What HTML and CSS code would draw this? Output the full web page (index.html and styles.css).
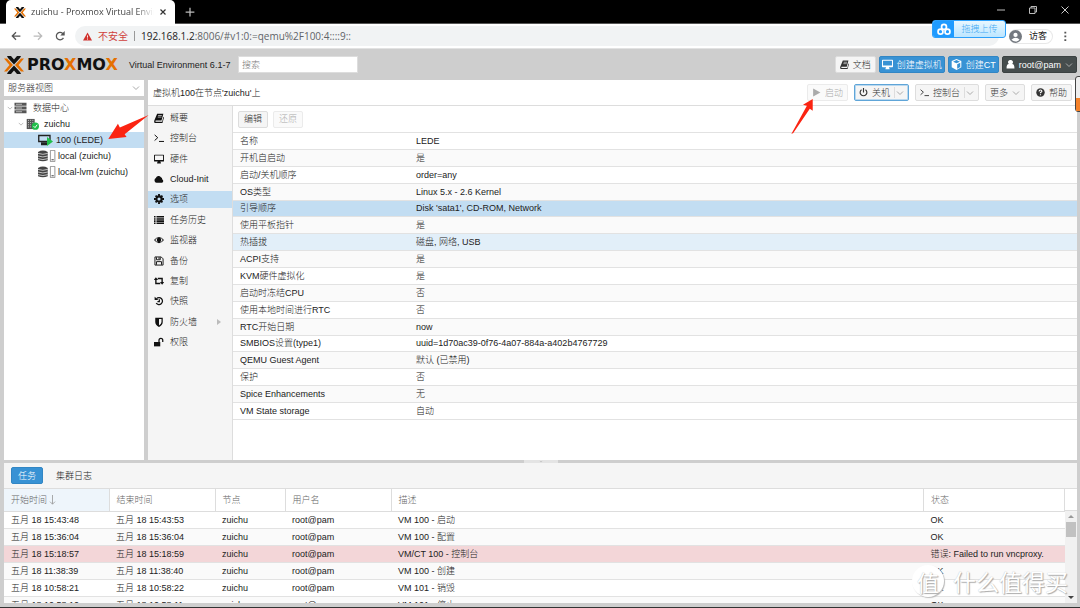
FILE: index.html
```html
<!DOCTYPE html>
<html lang="zh-CN">
<head>
<meta charset="utf-8">
<title>zuichu - Proxmox Virtual Environment</title>
<link rel="stylesheet" href="styles.css">
</head>
<body>
<svg class="sprite" aria-hidden="true">
  <symbol id="xmark" viewBox="0 0 20 18">
    <path d="M3 0h4l3 3.500L13 0h4l-1 2-6 6.500L4 2zM3 18h4l3-3.500 3 3.500h4l-1-2-6-6.500L4 16z" class="xdark"/>
    <path d="M0 2.500h3L9 9l-6 6.500H0L5.500 9zM20 2.500h-3L11 9l6 6.500h3L14.500 9z" class="xorange"/>
  </symbol>
  <symbol id="book" viewBox="0 0 16 16"><path d="M5 1h10l-3 11H3c-1 0-1 2 0 2h10l2-8 1 1-2.500 9H2c-2 0-2-2-1.500-4z"/><path d="M6.500 4h6M6 6.500h6" stroke="#fff" stroke-width="1"/></symbol>
  <symbol id="terminal" viewBox="0 0 16 16"><path d="M1 3l5 4.500L1 12M8 13.500h8" fill="none" stroke="currentColor" stroke-width="1.600"/></symbol>
  <symbol id="monitor" viewBox="0 0 16 16"><path fill-rule="evenodd" d="M1 1h14q1 0 1 1v9q0 1-1 1h-5l1 2v1H5v-1l1-2H1q-1 0-1-1V2q0-1 1-1zm.5 1.500v7h13v-7z"/></symbol>
  <symbol id="cloud" viewBox="0 0 16 16"><path d="M4 14a4 4 0 0 1-1-7.500A4.500 4.500 0 0 1 11 5a3 3 0 0 1 2 3.500A3 3 0 0 1 13 14z"/></symbol>
  <symbol id="gear" viewBox="0 0 16 16"><circle cx="8" cy="8" r="4.200" fill="none" stroke="currentColor" stroke-width="3.400"/><path d="M8 0v3M8 13v3M0 8h3M13 8h3M2.500 2.500l2 2M11.500 11.500l2 2M13.500 2.500l-2 2M4.500 11.500l-2 2" stroke="currentColor" stroke-width="3"/></symbol>
  <symbol id="list" viewBox="0 0 16 16"><path d="M0 1.500h2.500v2.500H0zM4 1.500h12v2.500H4zM0 5h2.500v2.500H0zM4 5h12v2.500H4zM0 8.500h2.500V11H0zM4 8.500h12V11H4zM0 12h2.500v2.500H0zM4 12h12v2.500H4z"/></symbol>
  <symbol id="eye" viewBox="0 0 16 16"><path fill-rule="evenodd" d="M0 8q8-10 16 0-8 10-16 0zm2 0q2 3 4 3.500Q3 8 6 4.500 4 5 2 8zm12 0q-2-3-4-3.500 3 3.500 0 7 2-.5 4-3.500z"/></symbol>
  <symbol id="floppy" viewBox="0 0 16 16"><path d="M1.500 1.500h10l3 3v10h-13zM4 2v4h6V2M4 14V9h8v5M8 2v3" fill="none" stroke="currentColor" stroke-width="1.500"/></symbol>
  <symbol id="retweet" viewBox="0 0 16 16"><path d="M3 6v6h7M13 10V4H6" fill="none" stroke="currentColor" stroke-width="2.200"/><path d="M3 2l3.500 4.500h-7zM13 14l3.500-4.500h-7z"/></symbol>
  <symbol id="history" viewBox="0 0 16 16"><path d="M4 4.200a5.600 5.600 0 1 1-.5 7.300M8.500 5v4H5.500" fill="none" stroke="currentColor" stroke-width="2"/><path d="M1 1l6 5.500H1z"/></symbol>
  <symbol id="shield" viewBox="0 0 16 16"><path fill-rule="evenodd" d="M2 1h12v7q0 5-6 8-6-3-6-8zm6 2v10.500q4-2.500 4-5.500V3z"/></symbol>
  <symbol id="unlock" viewBox="0 0 16 16"><path d="M0 8h10v7H0z"/><path d="M8 8V5a3 3 0 0 1 6 0v3" fill="none" stroke="currentColor" stroke-width="2"/></symbol>
  <symbol id="cube" viewBox="0 0 16 16"><path fill-rule="evenodd" d="M8 0l7 3v9l-7 4-7-4V3zm0 1.500L3 4l5 2 5-2zM9 7.500V14l4.500-2.500v-6z"/></symbol>
  <symbol id="user" viewBox="0 0 16 16"><path d="M8 0a4 4 0 0 1 3 7c3 0 4 3 4 8H1c0-5 1-8 4-8a4 4 0 0 1 3-7z"/></symbol>
  <symbol id="power" viewBox="0 0 16 16"><path d="M4.500 3a6 6 0 1 0 7 0M8 0v8" fill="none" stroke="currentColor" stroke-width="2"/></symbol>
  <symbol id="play" viewBox="0 0 16 16"><path d="M2 1l13 7-13 7z"/></symbol>
  <symbol id="help" viewBox="0 0 16 16"><circle cx="8" cy="8" r="7.500"/><path d="M5.500 6q0-2.500 2.500-2.500t2.500 2.200Q10.500 7 8 8v1.500M8 11v2" fill="none" stroke="#fff" stroke-width="2"/></symbol>
  <symbol id="chevron" viewBox="0 0 16 16"><path d="M2 5l6 6 6-6" fill="none" stroke="currentColor" stroke-width="2"/></symbol>
  <symbol id="servers" viewBox="0 0 16 16"><path d="M0 1h16v4H0zM0 6h16v4H0zM0 11h16v4H0z"/><path d="M2 3h8M2 8h8M2 13h8" stroke="#fff" stroke-width=".8"/></symbol>
  <symbol id="node" viewBox="0 0 18 16"><path d="M1 1h11v14H1z" fill="#555"/><path d="M3 3h1m2 0h1m2 0h1M3 6h1m2 0h1m2 0h1M3 9h1m2 0h1M3 12h1m2 0h1" stroke="#fff" stroke-width="1.200"/><circle cx="13" cy="11" r="5" fill="#21bf4b"/><path d="M10.500 11l2 2 3-4" fill="none" stroke="#fff" stroke-width="1.300"/></symbol>
  <symbol id="vm" viewBox="0 0 20 16"><path d="M1 2h15v8H1z" fill="none" stroke="#222" stroke-width="1.800"/><path d="M4 11h8v4H4z" fill="#222"/><path d="M12 4l8 6-8 6z" fill="#21bf4b"/></symbol>
  <symbol id="storage" viewBox="0 0 24 16"><path d="M0 2.500Q6.500-1 13 2.500v11q-6.500 3-13 0z" fill="#444"/><path d="M0 4.500q6.500 2.500 13 0M0 8q6.500 2.500 13 0M0 11.500q6.500 2.500 13 0" stroke="#fff" stroke-width=".9" fill="none"/><path d="M16.500.500h6v15h-6z" fill="#fff" stroke="#777"/><path d="M18 13h3" stroke="#555" stroke-width="1.500"/></symbol>
</svg>

<header class="browser">
  <div class="tabstrip">
    <div class="tab">
      <svg class="favicon"><use href="#xmark"/></svg>
      <span class="tab-title">zuichu - Proxmox Virtual Envir</span>
      <button class="plain" aria-label="关闭标签"><svg class="i8" viewBox="0 0 16 16"><path d="M3 3l10 10M13 3L3 13" stroke="#333" stroke-width="2.400"/></svg></button>
    </div>
    <button class="plain newtab" aria-label="新标签"><svg class="i10" viewBox="0 0 16 16"><path d="M8 1v14M1 8h14" stroke="#bbb" stroke-width="2"/></svg></button>
    <div class="winctl">
      <button class="plain" aria-label="最小化"><svg class="i8" viewBox="0 0 8 8"><path d="M0 4h8" stroke="#bbb"/></svg></button>
      <button class="plain" aria-label="还原窗口"><svg class="i8" viewBox="0 0 8 8"><path d="M.5 2h5.500v5.500H.5zM2 2V.5h5.500V6H6" fill="none" stroke="#bbb"/></svg></button>
      <button class="plain" aria-label="关闭"><svg class="i8" viewBox="0 0 8 8"><path d="M.5.5l7 7M7.500.5l-7 7" stroke="#ccc"/></svg></button>
    </div>
  </div>
  <div class="addressbar">
    <button class="plain" aria-label="后退"><svg class="i10" viewBox="0 0 16 16"><path d="M15 8H2M8 2L2 8l6 6" fill="none" stroke="#555" stroke-width="2"/></svg></button>
    <button class="plain" aria-label="前进"><svg class="i10" viewBox="0 0 16 16"><path d="M1 8h13M8 2l6 6-6 6" fill="none" stroke="#bbb" stroke-width="2"/></svg></button>
    <button class="plain" aria-label="刷新"><svg class="i10" viewBox="0 0 16 16"><path d="M13.500 11A6 6 0 1 1 12 3.500L14 6" fill="none" stroke="#555" stroke-width="2"/><path d="M15.500 0v7h-7z" fill="#555"/></svg></button>
    <div class="url">
      <svg class="i9" viewBox="0 0 16 16"><path d="M8 1l8 14H0z" fill="#d0312d"/><path d="M8 6v4M8 11.500v2" stroke="#fff" stroke-width="1.600"/></svg>
      <span class="insecure">不安全</span><span class="bar"></span><span class="address"><b>192.168.1.2</b>:8006/#v1:0:=qemu%2F100:4::::9::</span>
    </div>
    <button class="guest"><svg class="i13" viewBox="0 0 16 16"><circle cx="8" cy="8" r="8" fill="#747980"/><circle cx="8" cy="6" r="2.600" fill="#fff"/><path d="M3 12q5-5 10 0-5 4.500-10 0z" fill="#fff"/></svg>访客</button>
    <button class="plain menu-dots" aria-label="菜单"><svg class="i10" viewBox="0 0 16 16"><path d="M7 1h3v3H7zM7 7h3v3H7zM7 13h3v3H7z" fill="#555"/></svg></button>
  </div>
</header>

<div class="app">
  <div class="apphead">
    <div class="logo"><svg class="logomark"><use href="#xmark"/></svg><span>PRO<em>X</em>MO<em>X</em></span></div>
    <span class="version">Virtual Environment 6.1-7</span>
    <input class="search" type="text" placeholder="搜索" aria-label="搜索">
    <div class="headbtns">
      <button class="btn"><svg class="ic"><use href="#book"/></svg>文档</button>
      <button class="btn blue"><svg class="ic big"><use href="#monitor"/></svg>创建虚拟机</button>
      <button class="btn blue"><svg class="ic big"><use href="#cube"/></svg>创建CT</button>
      <button class="btn dark"><svg class="ic"><use href="#user"/></svg>root@pam<svg class="chev"><use href="#chevron"/></svg></button>
    </div>
  </div>

  <div class="workspace">
    <aside class="side">
      <div class="viewpick">
        <select aria-label="视图"><option>服务器视图</option></select>
        <svg class="chev"><use href="#chevron"/></svg>
      </div>
      <ul class="tree">
        <li class="l0"><svg class="chev"><use href="#chevron"/></svg><svg class="tnode"><use href="#servers"/></svg>数据中心</li>
        <li class="l1"><svg class="chev"><use href="#chevron"/></svg><svg class="tnode"><use href="#node"/></svg>zuichu</li>
        <li class="l2 on"><svg class="tvm"><use href="#vm"/></svg>100 (LEDE)</li>
        <li class="l2"><svg class="tstore"><use href="#storage"/></svg>local (zuichu)</li>
        <li class="l2"><svg class="tstore"><use href="#storage"/></svg>local-lvm (zuichu)</li>
      </ul>
    </aside>

    <main class="content">
      <div class="titlebar">
        <span>虚拟机100在节点'zuichu'上</span>
        <div class="actions">
          <button class="btn off" disabled><svg class="ic"><use href="#play"/></svg>启动</button>
          <button class="btn focus"><svg class="ic"><use href="#power"/></svg>关机<span class="split"><svg class="chev"><use href="#chevron"/></svg></span></button>
          <button class="btn"><svg class="ic"><use href="#terminal"/></svg>控制台<span class="split"><svg class="chev"><use href="#chevron"/></svg></span></button>
          <button class="btn">更多<svg class="chev"><use href="#chevron"/></svg></button>
          <button class="btn"><svg class="ic"><use href="#help"/></svg>帮助</button>
        </div>
      </div>
      <div class="split-body">
        <nav class="menu">
          <ul>
            <li><svg><use href="#book"/></svg>概要</li>
            <li><svg><use href="#terminal"/></svg>控制台</li>
            <li><svg><use href="#monitor"/></svg>硬件</li>
            <li><svg><use href="#cloud"/></svg>Cloud-Init</li>
            <li class="on"><svg><use href="#gear"/></svg>选项</li>
            <li><svg><use href="#list"/></svg>任务历史</li>
            <li><svg><use href="#eye"/></svg>监视器</li>
            <li><svg><use href="#floppy"/></svg>备份</li>
            <li><svg><use href="#retweet"/></svg>复制</li>
            <li><svg><use href="#history"/></svg>快照</li>
            <li><svg><use href="#shield"/></svg>防火墙<i class="more"></i></li>
            <li><svg><use href="#unlock"/></svg>权限</li>
          </ul>
        </nav>
        <section class="options">
          <div class="tools"><button class="btn">编辑</button><button class="btn off" disabled>还原</button></div>
          <table class="props">
            <tr><td>名称</td><td>LEDE</td></tr>
            <tr><td>开机自启动</td><td>是</td></tr>
            <tr><td>启动/关机顺序</td><td>order=any</td></tr>
            <tr><td>OS类型</td><td>Linux 5.x - 2.6 Kernel</td></tr>
            <tr class="on"><td>引导顺序</td><td>Disk 'sata1', CD-ROM, Network</td></tr>
            <tr><td>使用平板指针</td><td>是</td></tr>
            <tr class="hover"><td>热插拔</td><td>磁盘, 网络, USB</td></tr>
            <tr><td>ACPI支持</td><td>是</td></tr>
            <tr><td>KVM硬件虚拟化</td><td>是</td></tr>
            <tr><td>启动时冻结CPU</td><td>否</td></tr>
            <tr><td>使用本地时间进行RTC</td><td>否</td></tr>
            <tr><td>RTC开始日期</td><td>now</td></tr>
            <tr><td>SMBIOS设置(type1)</td><td>uuid=1d70ac39-0f76-4a07-884a-a402b4767729</td></tr>
            <tr><td>QEMU Guest Agent</td><td>默认 (已禁用)</td></tr>
            <tr><td>保护</td><td>否</td></tr>
            <tr><td>Spice Enhancements</td><td>无</td></tr>
            <tr><td>VM State storage</td><td>自动</td></tr>
          </table>
        </section>
      </div>
    </main>
  </div>

  <div class="splitter"><span><svg class="grip"><use href="#chevron"/></svg></span></div>

  <section class="log">
    <div class="logtabs"><button class="btn blue">任务</button><button class="plain">集群日志</button></div>
    <div class="logbody">
      <table class="tasks">
        <colgroup><col class="c-time"><col class="c-end"><col class="c-node"><col class="c-user"><col><col class="c-state"></colgroup>
        <thead><tr><th class="sorted">开始时间<svg class="sortarrow" viewBox="0 0 8 12"><path d="M4 0v11M1 8l3 3 3-3" fill="none" stroke="#999"/></svg></th><th>结束时间</th><th>节点</th><th>用户名</th><th>描述</th><th>状态</th></tr></thead>
        <tbody>
          <tr><td>五月 18 15:43:48</td><td>五月 18 15:43:53</td><td>zuichu</td><td>root@pam</td><td>VM 100 - 启动</td><td>OK</td></tr>
          <tr><td>五月 18 15:36:04</td><td>五月 18 15:36:04</td><td>zuichu</td><td>root@pam</td><td>VM 100 - 配置</td><td>OK</td></tr>
          <tr class="err"><td>五月 18 15:18:57</td><td>五月 18 15:18:59</td><td>zuichu</td><td>root@pam</td><td>VM/CT 100 - 控制台</td><td>错误: Failed to run vncproxy.</td></tr>
          <tr><td>五月 18 11:38:39</td><td>五月 18 11:38:40</td><td>zuichu</td><td>root@pam</td><td>VM 100 - 创建</td><td>OK</td></tr>
          <tr><td>五月 18 10:58:21</td><td>五月 18 10:58:22</td><td>zuichu</td><td>root@pam</td><td>VM 101 - 销毁</td><td>OK</td></tr>
          <tr><td>五月 18 10:58:10</td><td>五月 18 10:58:11</td><td>zuichu</td><td>root@pam</td><td>VM 101 - 停止</td><td>OK</td></tr>
        </tbody>
      </table>
      <div class="scrollcol"><div class="scrollhead"></div><div class="scrollbar"><i class="up"></i><i class="thumb"></i><i class="down"></i></div></div>
    </div>
  </section>
</div>

<div class="upload"><span class="upicon"><svg viewBox="0 0 16 14"><g fill="none" stroke="#fff" stroke-width="2"><circle cx="8" cy="4" r="2.800"/><circle cx="4" cy="9.500" r="2.800"/><circle cx="12" cy="9.500" r="2.800"/></g></svg></span><span class="uptext">拖拽上传</span></div>
<div class="edgeball"><i></i></div>
<svg class="arrow a1" viewBox="0 0 42 26"><path d="M42 0L17 20l2 3-19 2L10 9l2 4z"/></svg>
<svg class="arrow a2" viewBox="0 0 24 36"><path d="M0 36L16 7l-4-1L22 0v12l-3-2L2 35z"/></svg>
<div class="watermark"><span class="wm-ball">值</span><span>什么值得买</span></div>
</body>
</html>
```
FILE: styles.css
```css
* { box-sizing: border-box; }
body {
  margin: 0;
  height: 100vh;
  display: flex;
  flex-direction: column;
  overflow: hidden;
  position: relative;
  background: #cecece;
  color: #222;
  font: 300 9px/14px "Liberation Sans", "Noto Sans CJK SC", sans-serif;
  border-bottom: 1px solid #333;
}
button, input, select { font: inherit; color: inherit; margin: 0; }
ul { list-style: none; margin: 0; padding: 0; }
svg { flex: none; fill: currentColor; }
.sprite { position: absolute; width: 0; height: 0; }
.xdark { fill: #111; }
.xorange { fill: #e57000; }
.plain { border: 0; background: none; padding: 0; display: flex; align-items: center; justify-content: center; }
.i8 { width: 8px; height: 8px; }
.i9 { width: 9px; height: 9px; }
.i10 { width: 10px; height: 10px; }
.i13 { width: 13px; height: 13px; }

/* Browser chrome */
.browser { flex: none; font-family: "Open Sans", "Noto Sans CJK SC", sans-serif; font-weight: 400; }
.tabstrip { height: 24px; background: #000; display: flex; align-items: stretch; padding-left: 6px; border-bottom: 1px solid #555; }
.tab { width: 169px; background: #fff; border-radius: 5px 5px 0 0; display: flex; align-items: center; gap: 5px; padding: 0 8px; margin-bottom: -1px; }
.favicon { width: 12px; height: 11px; }
.tab-title { flex: 1; overflow: hidden; white-space: nowrap; color: #444; mask-image: linear-gradient(90deg, #000 85%, transparent); }
.newtab { width: 30px; }
.winctl { margin-left: auto; display: flex; gap: 24px; padding: 0 11px 4px 0; }
.addressbar { height: 25px; background: #fff; display: flex; align-items: center; gap: 12px; padding-left: 11px; border-bottom: 1px solid #e2e2e2; }
.url { flex: 1; height: 20px; border-radius: 10px; background: #f1f3f4; display: flex; align-items: center; padding-left: 8px; gap: 6px; font-size: 10px; margin-left: -2px; }
.insecure { color: #d0403c; }
.bar { width: 1px; height: 10px; background: #999; }
.address { color: #5f6368; }
.address b { font-weight: 400; color: #222; }
.guest { display: flex; align-items: center; gap: 7px; border: 1px solid #e8e8e8; border-left: 0; border-radius: 8px; background: #fff; padding: 0 5px 0 0; height: 15px; margin-left: -2px; }
.menu-dots { width: 20px; margin: 0 5px 0 -10px; }

/* Shared buttons */
.btn { height: 17px; border: 1px solid #ddd; border-radius: 2px; background: #f5f5f5; color: #333; display: flex; align-items: center; justify-content: center; gap: 4px; padding: 0 4px; white-space: nowrap; line-height: 14px; }
.btn.blue { background: #3892d4; border-color: #3286c4; color: #fff; padding: 0 2px; }
.btn.dark { background: #464d4d; border-color: #3c4242; color: #fff; padding: 0 3px; }
.btn.off { color: #aaa; border-color: #ebebeb; background: #fafafa; }
.btn.focus { border-color: #5fa5d8; box-shadow: inset 0 0 0 1px #b9d8ef; }
.ic { width: 9px; height: 9px; }
.ic.big { width: 11px; height: 11px; }
.chev { width: 8px; height: 8px; color: #aaa; }
.split { align-self: stretch; display: flex; align-items: center; border-left: 1px solid #ddd; margin: 2px 0; padding-left: 1px; }

/* Application */
.app { flex: 1; min-height: 0; display: flex; flex-direction: column; border: 1px solid #cecece; border-width: 0 3px 4px 4px; }
.apphead { height: 31px; flex: none; display: flex; align-items: center; }
.logo { display: flex; align-items: center; gap: 3px; width: 125px; color: #111; font: bold 16px/18px "DejaVu Sans", sans-serif; }
.logo em { font-style: normal; color: #e57000; }
.logomark { width: 20px; height: 18px; }
.version { width: 109px; white-space: nowrap; }
.search { width: 120px; height: 17px; border: 1px solid #ddd; background: #fff; padding: 0 3px; }
.search::placeholder { color: #777; }
.headbtns { margin-left: auto; display: flex; gap: 3px; }
.workspace { flex: 1; min-height: 0; display: flex; gap: 4px; }
.side { width: 140px; display: flex; flex-direction: column; gap: 4px; }
.viewpick { display: grid; height: 16px; align-items: center; background: #fff; }
.viewpick select { grid-area: 1 / 1; appearance: none; border: 0; background: #fff; height: 16px; padding: 0 4px; color: #333; }
.viewpick .chev { grid-area: 1 / 1; justify-self: end; margin-right: 4px; }
.tree { flex: 1; background: #fff; }
.tree li { height: 16px; display: flex; align-items: center; color: #222; }
.l0 { padding-left: 3px; }
.l1 { padding-left: 14px; }
.l2 { padding-left: 34px; }
.tree .on { background: #c2ddf2; }
.tree .chev { width: 6px; height: 6px; margin-right: 2px; }
.tnode { width: 13px; height: 12px; margin-right: 5px; color: #555; }
.l0 .tnode { margin: 0 6px 0 -1px; }
.tvm { width: 15px; height: 12px; margin-right: 3px; }
.tstore { width: 18px; height: 12px; margin-right: 2px; }

.content { flex: 1; min-width: 0; background: #fff; display: flex; flex-direction: column; }
.titlebar { height: 26px; display: flex; align-items: center; justify-content: space-between; padding: 0 5px; border-bottom: 1px solid #ddd; flex: none; }
.actions { display: flex; gap: 6px; }
.split-body { flex: 1; min-height: 0; display: flex; }
.menu { width: 85px; background: #f5f5f5; border-right: 1px solid #ddd; padding-top: 3px; }
.menu ul { display: grid; height: 242px; grid-auto-rows: 1fr; gap: 3px; }
.menu li { display: flex; align-items: center; gap: 6px; padding-left: 6px; color: #222; }
.menu li.on { background: #c2ddf2; }
.menu svg { width: 10px; height: 10px; color: #111; }
.more { margin-left: auto; margin-right: 11px; border: 3px solid transparent; border-left: 4px solid #bbb; border-right: 0; }
.options { flex: 1; min-width: 0; }
.tools { height: 26px; display: flex; align-items: center; gap: 5px; padding-left: 5px; }
.tools .btn { padding: 0 5px; }
table { border-collapse: collapse; table-layout: fixed; width: 100%; }
td, th { padding: 0 0 0 7px; text-align: left; font-weight: 300; white-space: nowrap; overflow: hidden; line-height: 14px; }
.props { height: 288px; }
.props td { border-top: 1px solid #e2e2e2; border-bottom: 1px solid #e2e2e2; }
.props td:first-child { width: 176px; }
.props tr:nth-child(even), .tasks tbody tr:nth-child(even) { background: #fafafa; }
.props tr.on { background: #c2ddf2; }
.props tr.hover { background: #e2eff9; }

.splitter { height: 3px; flex: none; display: flex; justify-content: center; }
.splitter span { width: 34px; background: #e4e4e4; display: flex; justify-content: center; }
.grip { width: 6px; height: 3px; color: #999; }

/* Task log */
.log { height: 140px; flex: none; background: #fff; display: flex; flex-direction: column; overflow: hidden; }
.logtabs { height: 26px; flex: none; background: #f5f5f5; border-bottom: 1px solid #ddd; display: flex; align-items: center; gap: 13px; padding-left: 7px; }
.logtabs .btn { padding: 0 6px; }
.logbody { display: flex; flex: 1; min-height: 0; }
.tasks { flex: 1; align-self: flex-start; }
.tasks th { height: 22px; color: #666; border-right: 1px solid #ddd; border-bottom: 1px solid #ddd; }
.tasks th.sorted { background: #eef5fb; }
.sortarrow { width: 7px; height: 10px; margin-left: 2px; vertical-align: middle; }
.tasks td { height: 17px; border-bottom: 1px solid #e2e2e2; }
.tasks .err { background: #f3d6d8; }
.c-time { width: 105px; }
.c-end { width: 106px; }
.c-node { width: 70px; }
.c-user { width: 106px; }
.c-state { width: 141px; }
.scrollcol { width: 12px; display: flex; flex-direction: column; }
.scrollhead { height: 22px; border-bottom: 1px solid #ddd; flex: none; }
.scrollbar { flex: 1; background: #f1f1f1; display: flex; flex-direction: column; align-items: center; padding: 4px 0; gap: 4px; }
.thumb { width: 10px; height: 15px; background: #c1c1c1; }
.up, .down { border: 3px solid transparent; }
.up { border-top: 0; border-bottom-color: #999; }
.down { border-bottom: 0; border-top-color: #444; margin-top: auto; }

/* Overlays */
.upload { position: absolute; top: 20px; right: 74px; width: 74px; height: 18px; display: flex; border: 1px solid #2da0fa; border-radius: 3px; overflow: hidden; background: linear-gradient(#e8f7ff, #bde6ff); color: #42a8f2; }
.upicon { width: 21px; background: #1f9bff; display: flex; align-items: center; justify-content: center; }
.upicon svg { width: 14px; height: 13px; }
.uptext { flex: 1; text-align: center; line-height: 16px; }
.edgeball { position: absolute; top: 76px; right: -3px; width: 8px; height: 36px; border: 1px solid #444; border-radius: 3px; background: #eee; display: flex; align-items: flex-end; }
.edgeball i { flex: 1; height: 13px; background: #f5822a; }
.arrow { position: absolute; fill: #fb2412; }
.a1 { left: 108px; top: 115px; width: 41px; height: 25px; }
.a2 { left: 791px; top: 99px; width: 24px; height: 35px; }
.watermark { position: absolute; right: 12px; bottom: 10px; display: flex; align-items: center; gap: 9px; color: #fff; font: 23px/32px "Noto Sans CJK SC", sans-serif; text-shadow: 1px 1px 1px #aaa, 0 0 1px #bbb; }
.wm-ball { width: 32px; height: 32px; border-radius: 50%; background: #fff; box-shadow: 1px 1px 1px #bbb; text-align: center; font-size: 22px; }
```
